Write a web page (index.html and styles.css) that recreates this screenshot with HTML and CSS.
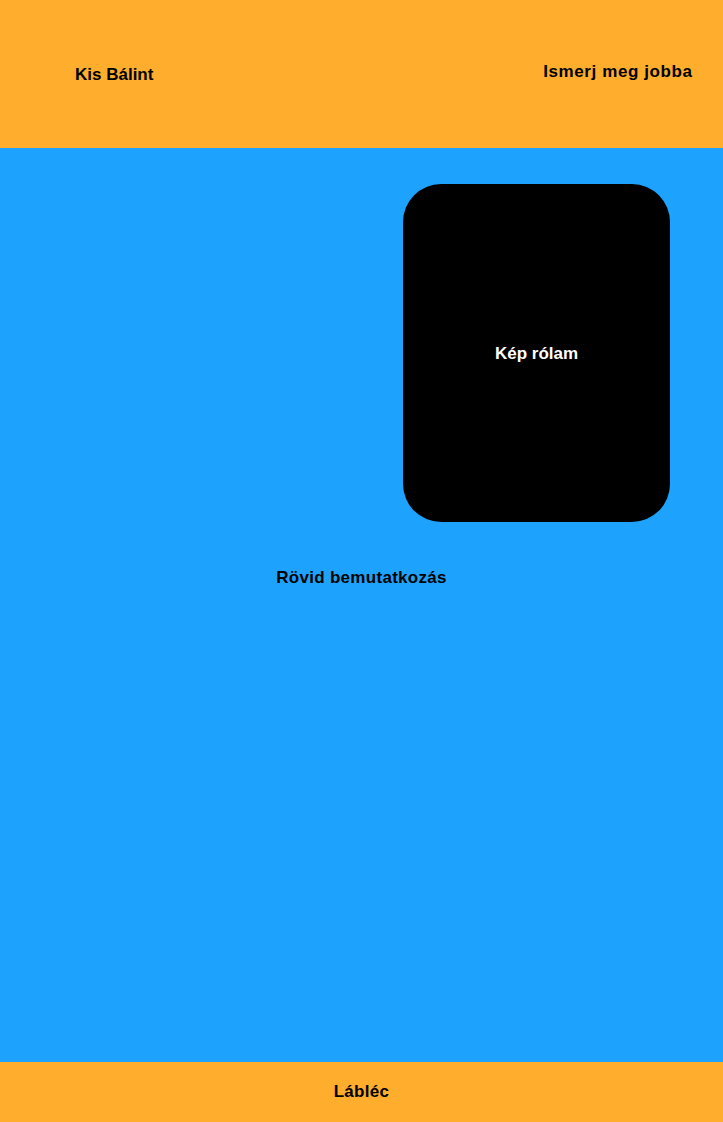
FILE: index.html
```html
<!DOCTYPE html>
<html lang="hu">
<head>
<meta charset="utf-8">
<title>Kis Bálint</title>
<link rel="stylesheet" href="styles.css">
</head>
<body>
<header class="site-header">
  <div class="brand">Kis Bálint</div>
  <nav class="nav-link">Ismerj meg jobba</nav>
</header>
<main class="content">
  <div class="photo-row">
    <div class="photo">Kép rólam</div>
  </div>
  <p class="intro">Rövid bemutatkozás</p>
</main>
<footer class="site-footer">Lábléc</footer>
</body>
</html>
```
FILE: styles.css
```css
html, body {
  margin: 0;
  padding: 0;
}
body {
  height: 100vh;
  display: flex;
  flex-direction: column;
  font-family: "Liberation Sans", Arial, sans-serif;
  font-weight: bold;
  font-size: 17px;
  color: #000;
}
.site-header {
  height: 148px;
  box-sizing: border-box;
  background: #feae2c;
  display: flex;
  justify-content: space-between;
  align-items: flex-start;
  padding: 62px 31px 0 75px;
}
.brand {
  margin-top: 3px;
}
.nav-link {
  letter-spacing: 0.6px;
  margin-right: -0.6px;
}
.content {
  flex: 1;
  background: #1da3fe;
  padding-top: 36px;
  display: flex;
  flex-direction: column;
}
.photo-row {
  display: flex;
  justify-content: flex-end;
  padding-right: 53px;
}
.photo {
  width: 267px;
  height: 338px;
  background: #000;
  color: #fff;
  border-radius: 38px;
  display: flex;
  align-items: center;
  justify-content: center;
  padding-top: 2px;
  box-sizing: border-box;
}
.intro {
  margin: 46px 0 0;
  text-align: center;
  letter-spacing: 0.3px;
}
.site-footer {
  height: 60px;
  background: #feae2c;
  display: flex;
  align-items: center;
  justify-content: center;
  letter-spacing: 0.3px;
}
```
